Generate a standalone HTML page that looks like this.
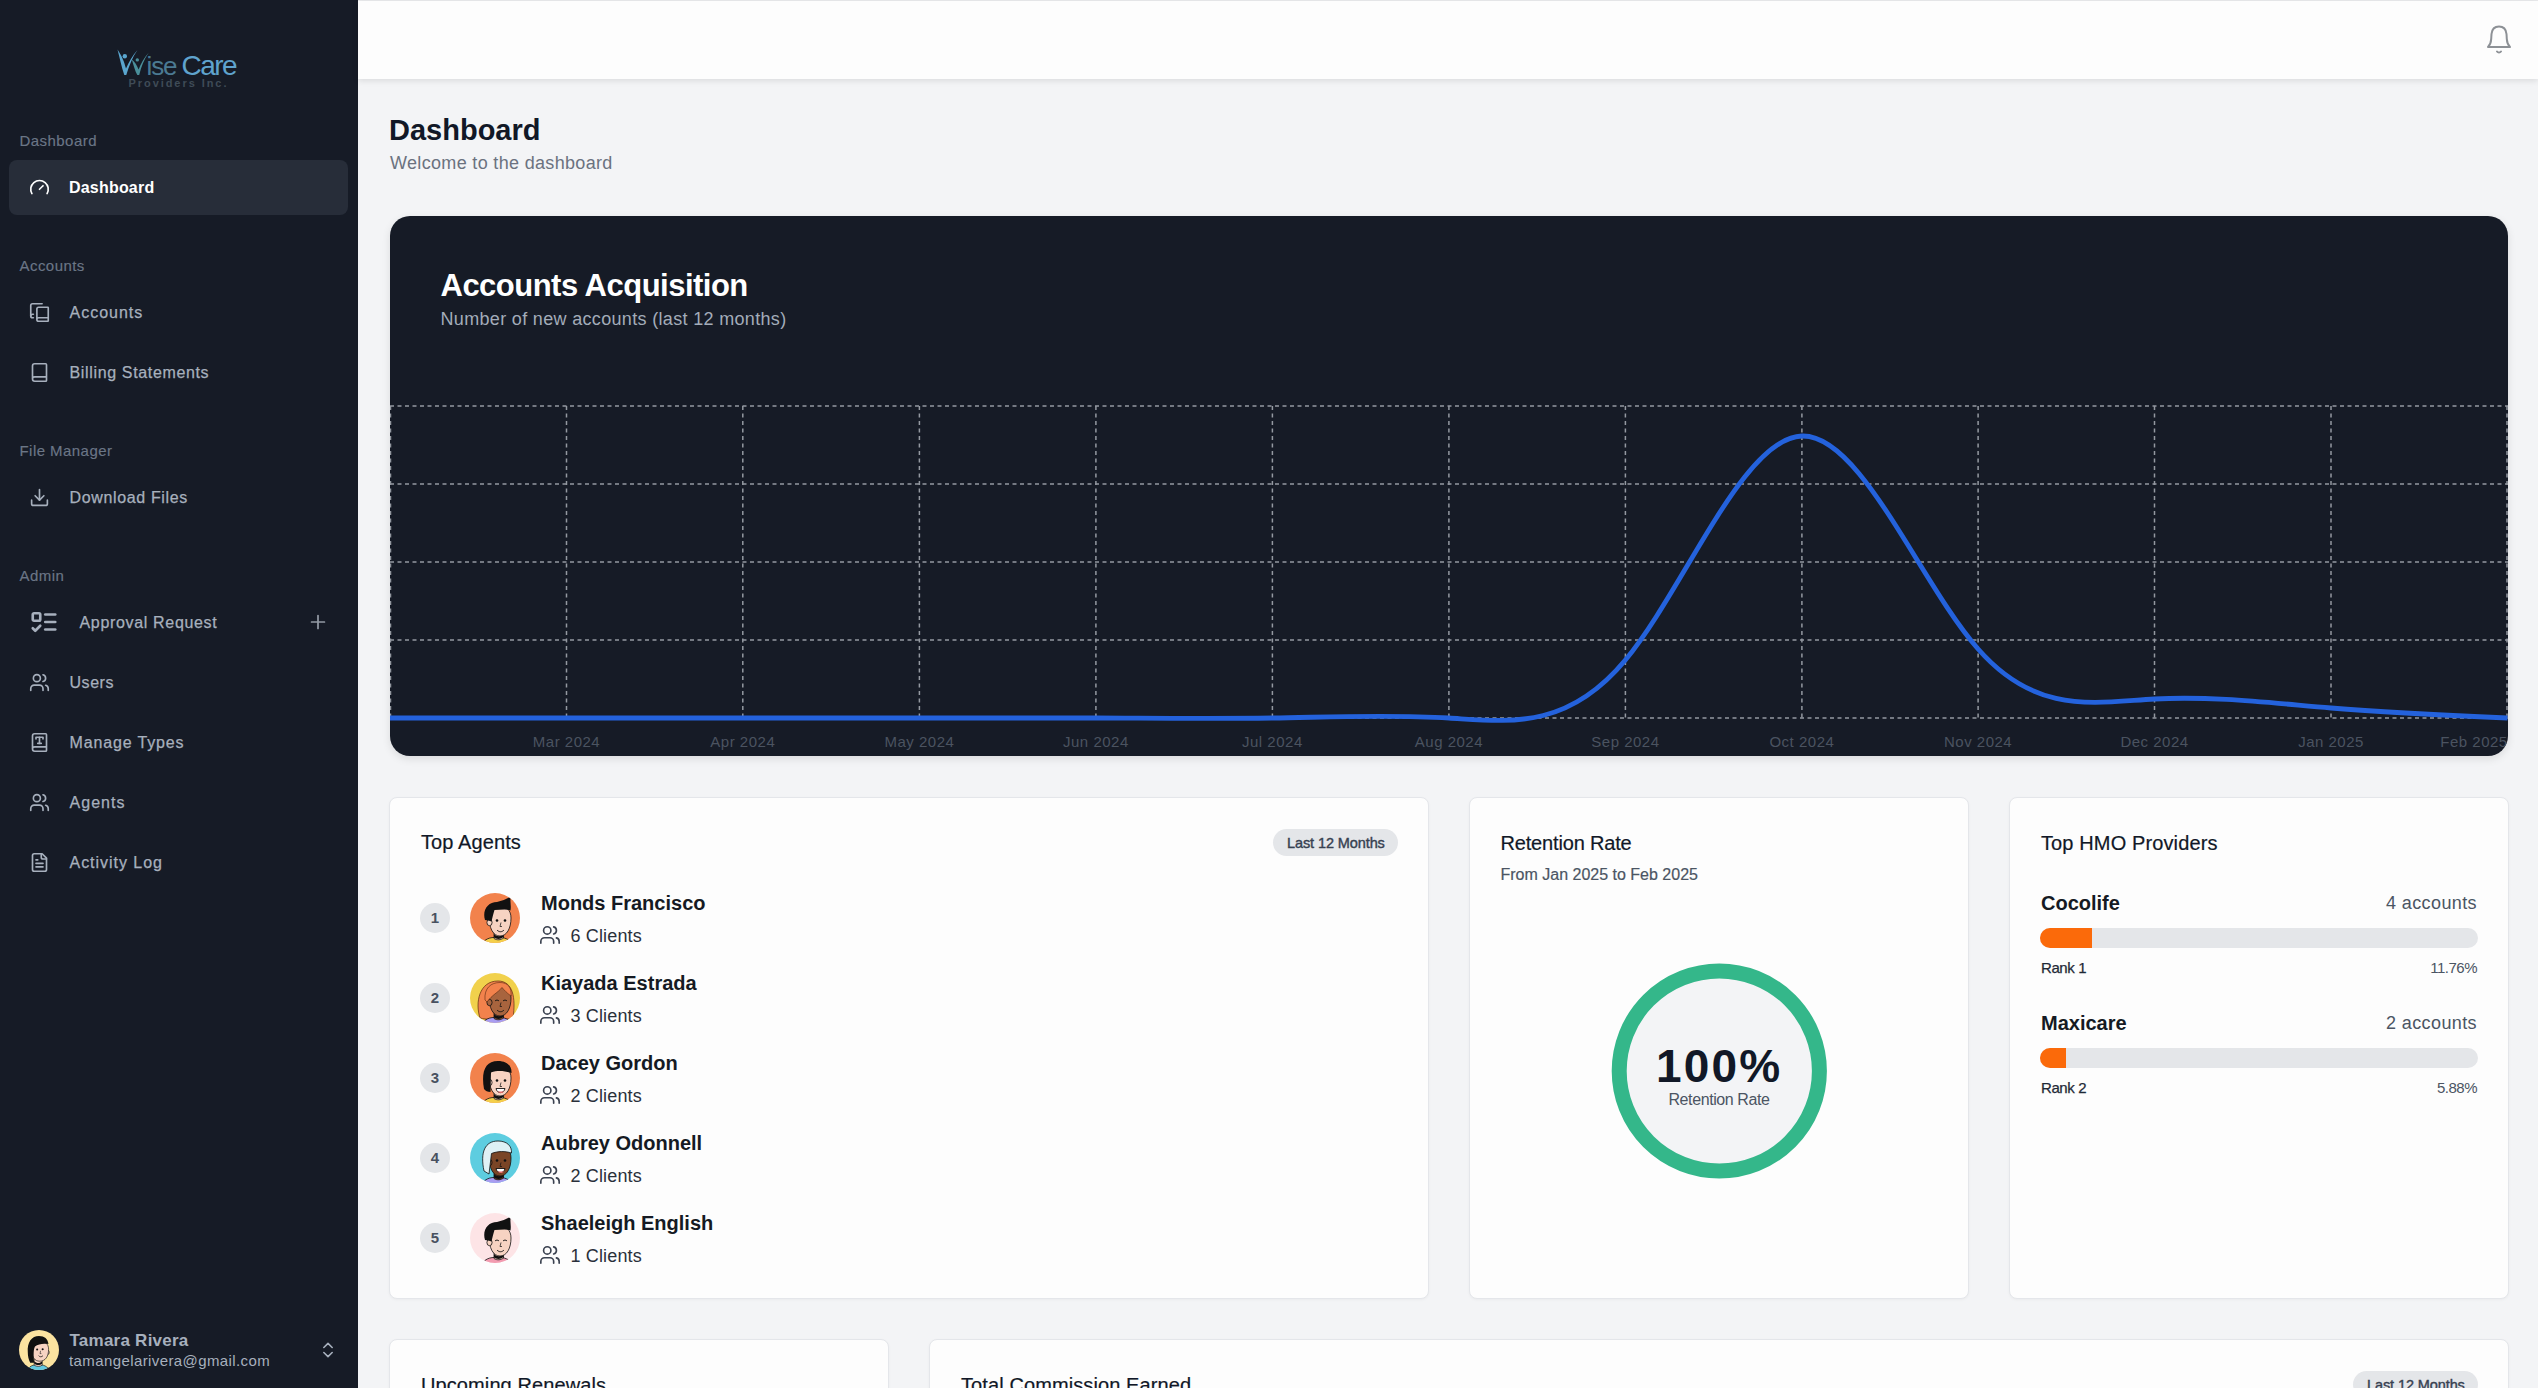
<!DOCTYPE html>
<html><head><meta charset="utf-8">
<style>
*{box-sizing:border-box;margin:0;padding:0}
html,body{width:2538px;height:1388px;overflow:hidden;background:#f3f4f6;font-family:"Liberation Sans",sans-serif}
.a{position:absolute;white-space:nowrap;line-height:1}
#side{position:absolute;left:0;top:0;width:358px;height:1388px;background:#161b26}
.gl{font-size:15px;color:#6b7686;letter-spacing:0.45px;-webkit-text-stroke:0.15px #6b7686}
.ni{font-size:16px;color:#a7b0bd;letter-spacing:0.55px;-webkit-text-stroke:0.25px #a7b0bd}
.ic{position:absolute;fill:none;stroke:#a7b0bd;stroke-width:1.9;stroke-linecap:round;stroke-linejoin:round}
#hdr{position:absolute;left:358px;top:1px;width:2180px;height:78px;background:#fdfdfd;box-shadow:0 2px 6px rgba(0,0,0,0.10)}
.card{position:absolute;background:#fdfdfd;border:1.5px solid #e4e6ea;border-radius:8px;box-shadow:0 1px 3px rgba(0,0,0,0.04)}
.ttl{font-size:20px;color:#111827;letter-spacing:0.1px;-webkit-text-stroke:0.2px #111827}
.rk{position:absolute;width:30px;height:30px;border-radius:50%;background:#e4e6e9;color:#485160;font-size:15px;font-weight:700;text-align:center;line-height:30px}
.nm{font-size:20px;font-weight:700;color:#151a23}
.cl{font-size:18px;color:#2a303a;letter-spacing:0.15px}
.av{position:absolute;width:50px;height:50px}
</style></head><body>

<!-- SIDEBAR -->
<div id="side">
  <!-- logo -->
  <svg class="a" style="left:105px;top:40px" width="150" height="60" viewBox="0 0 150 60">
    <path d="M12.5,9.5 C14.5,17 16.5,27 19.3,35 L21.3,35 C24,26 27.5,17 32.5,10 C27.5,15.5 23.8,22 21,28.5 C19.2,22 17.5,17 12.5,9.5 Z" fill="#5aa6cf"/>
    <circle cx="19.8" cy="16.3" r="2.2" fill="#5aa6cf"/>
    <path d="M26.8,19.5 C28.5,25 30,31 32.3,35 L34.2,35 C36.2,27 39,19 43.8,12.5 C38.8,18 35.8,24 33.6,29.5 C31.8,25 30,22 26.8,19.5 Z" fill="#4a8f9a"/>
    <circle cx="32.3" cy="19.9" r="1.7" fill="#4a8f9a"/>
    <text x="41.5" y="34.9" font-family="Liberation Sans" font-size="26" fill="#4b7a92" letter-spacing="-1.1">ise</text>
    <text x="76.5" y="34.9" font-family="Liberation Sans" font-size="28" fill="#5fa3cd" letter-spacing="-1.5">Care</text>
    <text x="23.5" y="47.3" font-family="Liberation Sans" font-size="11" font-weight="700" fill="#3f4b57" letter-spacing="1.94">Providers Inc.</text>
  </svg>

  <div class="a gl" style="left:19.5px;top:132.5px">Dashboard</div>
  <div style="position:absolute;left:9px;top:160px;width:339px;height:55px;background:#272d39;border-radius:8px"></div>
  <svg class="ic" style="left:28.5px;top:176.5px;stroke:#fff" width="21" height="21" viewBox="0 0 24 24"><path d="m12 14 4-4"/><path d="M3.34 19a10 10 0 1 1 17.32 0"/></svg>
  <div class="a" style="left:69px;top:180px;font-size:16px;font-weight:700;color:#fff;letter-spacing:0.2px">Dashboard</div>

  <div class="a gl" style="left:19.5px;top:257.5px">Accounts</div>
  <svg class="ic" style="left:28.5px;top:301.5px" width="21" height="21" viewBox="0 0 24 24"><path d="M2 16V4a2 2 0 0 1 2-2h11"/><path d="M22 18H11a2 2 0 1 0 0 4h10.5a.5.5 0 0 0 .5-.5v-15a.5.5 0 0 0-.5-.5H11a2 2 0 0 0-2 2v12"/><path d="M5 14H4a2 2 0 1 0 0 4h1"/></svg>
  <div class="a ni" style="left:69.5px;top:304.5px;letter-spacing:1px">Accounts</div>
  <svg class="ic" style="left:28.5px;top:361.5px" width="21" height="21" viewBox="0 0 24 24"><path d="M4 19.5v-15A2.5 2.5 0 0 1 6.5 2H19a1 1 0 0 1 1 1v18a1 1 0 0 1-1 1H6.5a1 1 0 0 1 0-5H20"/></svg>
  <div class="a ni" style="left:69.5px;top:364.5px;letter-spacing:0.65px">Billing Statements</div>

  <div class="a gl" style="left:19.5px;top:442.5px">File Manager</div>
  <svg class="ic" style="left:28.5px;top:486.5px" width="21" height="21" viewBox="0 0 24 24"><path d="M21 15v4a2 2 0 0 1-2 2H5a2 2 0 0 1-2-2v-4"/><polyline points="7 10 12 15 17 10"/><line x1="12" x2="12" y1="15" y2="3"/></svg>
  <div class="a ni" style="left:69.5px;top:489.5px;letter-spacing:0.65px">Download Files</div>

  <div class="a gl" style="left:19.5px;top:567.5px">Admin</div>
  <svg class="ic" style="left:29px;top:607px;stroke-width:2.1" width="30" height="30" viewBox="0 0 24 24"><rect x="3" y="5" width="6" height="6" rx="1"/><path d="m3 17 2 2 4-4"/><path d="M13 6h8"/><path d="M13 12h8"/><path d="M13 18h8"/></svg>
  <div class="a ni" style="left:79.5px;top:614.5px;letter-spacing:0.67px">Approval Request</div>
  <svg class="ic" style="left:307px;top:611px;stroke:#939aa4" width="22" height="22" viewBox="0 0 24 24"><path d="M5 12h14"/><path d="M12 5v14"/></svg>

  <svg class="ic" style="left:28.5px;top:671.5px" width="21" height="21" viewBox="0 0 24 24"><path d="M16 21v-2a4 4 0 0 0-4-4H6a4 4 0 0 0-4 4v2"/><circle cx="9" cy="7" r="4"/><path d="M22 21v-2a4 4 0 0 0-3-3.87"/><path d="M16 3.13a4 4 0 0 1 0 7.75"/></svg>
  <div class="a ni" style="left:69.5px;top:674.5px">Users</div>
  <svg class="ic" style="left:28.5px;top:731.5px" width="21" height="21" viewBox="0 0 24 24"><path d="M10 13h4"/><path d="M12 6v7"/><path d="M16 8V6H8v2"/><path d="M4 19.5v-15A2.5 2.5 0 0 1 6.5 2H19a1 1 0 0 1 1 1v18a1 1 0 0 1-1 1H6.5a1 1 0 0 1 0-5H20"/></svg>
  <div class="a ni" style="left:69.5px;top:734.5px;letter-spacing:0.85px">Manage Types</div>
  <svg class="ic" style="left:28.5px;top:791.5px" width="21" height="21" viewBox="0 0 24 24"><path d="M16 21v-2a4 4 0 0 0-4-4H6a4 4 0 0 0-4 4v2"/><circle cx="9" cy="7" r="4"/><path d="M22 21v-2a4 4 0 0 0-3-3.87"/><path d="M16 3.13a4 4 0 0 1 0 7.75"/></svg>
  <div class="a ni" style="left:69.5px;top:794.5px;letter-spacing:1.05px">Agents</div>
  <svg class="ic" style="left:28.5px;top:851.5px" width="21" height="21" viewBox="0 0 24 24"><path d="M15 2H6a2 2 0 0 0-2 2v16a2 2 0 0 0 2 2h12a2 2 0 0 0 2-2V7Z"/><path d="M14 2v4a2 2 0 0 0 2 2h4"/><path d="M10 9H8"/><path d="M16 13H8"/><path d="M16 17H8"/></svg>
  <div class="a ni" style="left:69.5px;top:854.5px;letter-spacing:0.97px">Activity Log</div>

  <!-- user -->
  <svg class="a" style="left:19px;top:1330px" width="40" height="40" viewBox="0 0 50 50">
    <defs><clipPath id="cT"><circle cx="25" cy="25" r="25"/></clipPath></defs>
    <g clip-path="url(#cT)"><rect width="50" height="50" fill="#fbe3a0"/>
<path d="M10,52 C12,45 18,43 24,43.5 C30,43 36,45 39,52 Z" fill="#62c8e0" stroke="#111" stroke-width="0.8"/>
<path d="M19,36 L19,44 C22,46 26,46 29,44 L29,36 Z" fill="#f7d3c2" stroke="#111" stroke-width="0.8"/><path d="M19,39 C22,42 26,42 29,39 L29,42 C26,44.5 22,44.5 19,42 Z" fill="#111"/>
<ellipse cx="36" cy="28" rx="1.8" ry="2.6" fill="#f7d3c2" stroke="#111" stroke-width="0.8"/><path d="M15.5,22 C15.5,34 19.5,39 26,39 C33,39 37,33 37,24 C37,17 32,14 26,14 C20,14 15.5,16 15.5,22 Z" fill="#f7d3c2" stroke="#111" stroke-width="0.8"/>
<path d="M11,28 C10,15 16,7.5 25,7.5 C32,7.5 36,11 36.8,17.5 C30,16.5 24,17.5 20,20.5 C18,24 18,31 19,41 L14,41 C12,37 11,32 11,28 Z" fill="#111"/>
<circle cx="22.7" cy="24.4" r="1.3" fill="#111"/><circle cx="29.6" cy="24" r="1.3" fill="#111"/>
<path d="M27,26 L26.3,29.5 L28,29.5" stroke="#111" stroke-width="0.7" fill="none"/>
<path d="M24.5,32 C26,34 28.5,34 30,32" stroke="#111" stroke-width="0.9" fill="none"/>
</g>
  </svg>
  <div class="a" style="left:69.5px;top:1331.5px;font-size:17px;font-weight:700;color:#a7b0bd;letter-spacing:0.24px">Tamara Rivera</div>
  <div class="a" style="left:69px;top:1353px;font-size:15px;color:#a7b0bd;letter-spacing:0.4px">tamangelarivera@gmail.com</div>
  <svg class="ic" style="left:318px;top:1340px" width="20" height="20" viewBox="0 0 24 24"><path d="m7 15 5 5 5-5"/><path d="m7 9 5-5 5 5"/></svg>
</div>

<!-- HEADER -->
<div style="position:absolute;left:358px;top:0;width:2180px;height:1px;background:#e9eaec"></div>
<div id="hdr"></div>
<svg class="a" style="left:2485px;top:24px" width="28" height="32" viewBox="0 0 28 32" fill="none" stroke="#8d9196" stroke-width="2" stroke-linejoin="round" stroke-linecap="round">
  <path d="M3,23 C5,21 6,19 6.2,15 L6.5,10 C7,5 10,2.5 14,2.5 C18,2.5 21,5 21.5,10 L21.8,15 C22,19 23,21 25,23 Z"/>
  <path d="M12,27.5 C13,28.8 15,28.8 16,27.5"/>
</svg>

<!-- TITLE -->
<div class="a" style="left:389px;top:115.5px;font-size:29px;font-weight:700;color:#111827;letter-spacing:0px">Dashboard</div>
<div class="a" style="left:390px;top:153.8px;font-size:18px;color:#6b7280;letter-spacing:0.33px">Welcome to the dashboard</div>

<!-- CHART CARD -->
<div style="position:absolute;left:390px;top:216px;width:2118px;height:540px;background:#161b26;border-radius:20px;box-shadow:0 3px 8px rgba(0,0,0,0.10);overflow:hidden">
  <div class="a" style="left:50.5px;top:54px;font-size:31px;font-weight:700;color:#fff;letter-spacing:-0.51px">Accounts Acquisition</div>
  <div class="a" style="left:50.5px;top:93.5px;font-size:18px;color:#a3acb9;letter-spacing:0.33px">Number of new accounts (last 12 months)</div>
</div>
<svg style="position:absolute;left:0;top:0" width="2538" height="1388">
  <defs><clipPath id="cc"><rect x="390" y="216" width="2118" height="540" rx="20"/></clipPath></defs>
  <g clip-path="url(#cc)">
  <g stroke="#9499a1" stroke-width="1.5" stroke-dasharray="4 3.5" fill="none">
    <path d="M390,406H2508M390,484H2508M390,562H2508M390,640H2508M390,718H2508"/>
    <path d="M390.5,406V718M566.5,406V718M742.8,406V718M919.4,406V718M1095.9,406V718M1272.4,406V718M1448.9,406V718M1625.4,406V718M1801.9,406V718M1978.1,406V718M2154.5,406V718M2331,406V718M2507,406V718"/>
  </g>
  <path id="ln" fill="none" stroke="#2462dc" stroke-width="4.8" d="M390.0,718.0C448.9,718.0,507.7,718.0,566.5,718.0C625.3,718.0,684.0,718.0,742.8,718.0C801.6,718.0,860.5,718.1,919.4,718.0C978.3,717.9,1037.1,717.8,1095.9,718.0C1154.7,718.2,1213.6,718.9,1272.4,718.0C1331.2,717.1,1390.1,714.5,1448.9,718.0C1507.7,721.5,1566.6,730.9,1625.4,660.0C1684.2,589.1,1743.1,437.8,1801.9,436.0C1860.7,434.2,1919.4,582.0,1978.1,649.0C2036.8,716.0,2095.7,702.2,2154.5,699.0C2213.3,695.8,2272.2,703.1,2331.0,708.0C2389.8,712.9,2448.7,715.5,2507.5,718.0"/>
  <g font-family="Liberation Sans" font-size="15" fill="#4b5360" text-anchor="middle" letter-spacing="0.5">
    <text x="566.5" y="747">Mar 2024</text><text x="742.8" y="747">Apr 2024</text><text x="919.4" y="747">May 2024</text>
    <text x="1095.9" y="747">Jun 2024</text><text x="1272.4" y="747">Jul 2024</text><text x="1448.9" y="747">Aug 2024</text>
    <text x="1625.4" y="747">Sep 2024</text><text x="1801.9" y="747">Oct 2024</text><text x="1978.1" y="747">Nov 2024</text>
    <text x="2154.5" y="747">Dec 2024</text><text x="2331" y="747">Jan 2025</text><text x="2474" y="747">Feb 2025</text>
  </g>
  </g>
</svg>

<!-- CARDS ROW 2 -->
<div class="card" style="left:389px;top:797px;width:1040px;height:502px"></div>
<div class="card" style="left:1469px;top:797px;width:500px;height:502px"></div>
<div class="card" style="left:2009px;top:797px;width:500px;height:502px"></div>
<!-- CARDS ROW 3 -->
<div class="card" style="left:389px;top:1339px;width:500px;height:200px"></div>
<div class="card" style="left:929px;top:1339px;width:1580px;height:200px"></div>

<svg width="0" height="0" style="position:absolute">
 <defs>
  <clipPath id="avc"><circle cx="25" cy="25" r="25"/></clipPath>
  <symbol id="usr" viewBox="0 0 24 24"><g fill="none" stroke="#3b4250" stroke-width="1.8" stroke-linecap="round" stroke-linejoin="round"><path d="M16 21v-2a4 4 0 0 0-4-4H6a4 4 0 0 0-4 4v2"/><circle cx="9" cy="7" r="4"/><path d="M22 21v-2a4 4 0 0 0-3-3.87"/><path d="M16 3.13a4 4 0 0 1 0 7.75"/></g></symbol>
 </defs>
</svg>

<!-- TOP AGENTS -->
<div class="a ttl" style="left:421px;top:832.4px">Top Agents</div>
<div style="position:absolute;left:1273px;top:829px;width:125px;height:27px;border-radius:14px;background:#e4e6e9"></div>
<div class="a" style="left:1287px;top:835.6px;font-size:14.5px;color:#374151;letter-spacing:-0.1px;-webkit-text-stroke:0.4px #374151">Last 12 Months</div>

<div class="rk" style="left:420px;top:903px">1</div>
<svg class="av" style="left:470px;top:893px" viewBox="0 0 50 50"><g clip-path="url(#avc)">
 <rect width="50" height="50" fill="#f2824c"/><path d="M12,52 C14,46 20,44 27,44.5 C34,44 40,46 43,52 Z" fill="#f4cf4a" stroke="#111" stroke-width="0.8"/><path d="M24,37 L24,45.5 C27,47.5 31,47 33.5,45 L33.5,37 Z" fill="#f7d3c2" stroke="#111" stroke-width="0.8"/><path d="M24,41 C27,44 31,44 33.5,41 L33.5,44 C30.5,46.5 26.5,46.5 24,44.5 Z" fill="#111"/><path d="M19,23 C19,35 23,43 30,43 C37,43 41,35 41,25 C41,17 36,13 30,13 C24,13 19,16 19,23 Z" fill="#f7d3c2" stroke="#111" stroke-width="0.8"/><ellipse cx="19.5" cy="29.5" rx="2.6" ry="3.2" fill="#f7d3c2" stroke="#111" stroke-width="0.8"/><path d="M15,27 C12,17 18,9 27,9 C32,8 37,6 41,3.5 C39.5,8 41.5,12 40.5,17.5 C36,15.5 30,17 24.5,17 C23.5,20 22.5,24 21.5,28.5 C19.5,27.5 17,27.5 15,27 Z" fill="#111"/><circle cx="27" cy="27.5" r="1.3" fill="#111"/><circle cx="35" cy="27.5" r="1.3" fill="#111"/><path d="M31,29.5 L30,33.5 L32,33.5" stroke="#111" stroke-width="0.7" fill="none"/><path d="M27,37 C29,39.3 32,39.3 34,37" stroke="#111" stroke-width="0.9" fill="none"/>
</g></svg>
<div class="a nm" style="left:541px;top:893px">Monds Francisco</div>
<svg style="position:absolute;left:539px;top:924px" width="22" height="22"><use href="#usr"/></svg>
<div class="a cl" style="left:570.5px;top:927.2px">6 Clients</div>

<div class="rk" style="left:420px;top:983px">2</div>
<svg class="av" style="left:470px;top:973px" viewBox="0 0 50 50"><g clip-path="url(#avc)">
 <rect width="50" height="50" fill="#f1d14c"/><path d="M10,45 C5,30 9,8 28,8 C43,8 46,25 43,45 C38,47 15,47 10,45 Z" fill="#f2824c" stroke="#5a2a10" stroke-width="0.7"/><path d="M12,52 C14,46 20,44 27,44.5 C34,44 40,46 43,52 Z" fill="#a99cf0" stroke="#111" stroke-width="0.8"/><path d="M24,37 L24,45.5 C27,47.5 31,47 33.5,45 L33.5,37 Z" fill="#a8643e" stroke="#111" stroke-width="0.8"/><path d="M24,41 C27,44 31,44 33.5,41 L33.5,44 C30.5,46.5 26.5,46.5 24,44.5 Z" fill="#111"/><path d="M19,23 C19,35 23,43 30,43 C37,43 41,35 41,25 C41,17 36,13 30,13 C24,13 19,16 19,23 Z" fill="#a8643e" stroke="#111" stroke-width="0.8"/><ellipse cx="19.5" cy="29.5" rx="2.6" ry="3.2" fill="#a8643e" stroke="#111" stroke-width="0.8"/><path d="M15,27 C14,15 21,9.5 30,9.5 C38,9.5 42,15 41,23 C37,20 34,17 32,14.5 C28,19.5 22,22 17,29 Z" fill="#f2824c" stroke="#5a2a10" stroke-width="0.6"/><path d="M25,28 C26,26.8 28,26.8 29,28 M33,28 C34,26.8 36,26.8 37,28" stroke="#111" stroke-width="0.9" fill="none"/><path d="M31,29.5 L30,33.5 L32,33.5" stroke="#111" stroke-width="0.7" fill="none"/><path d="M27,37 C29,39.3 32,39.3 34,37" stroke="#111" stroke-width="0.9" fill="none"/>
</g></svg>
<div class="a nm" style="left:541px;top:973px">Kiayada Estrada</div>
<svg style="position:absolute;left:539px;top:1004px" width="22" height="22"><use href="#usr"/></svg>
<div class="a cl" style="left:570.5px;top:1007.2px">3 Clients</div>

<div class="rk" style="left:420px;top:1063px">3</div>
<svg class="av" style="left:470px;top:1053px" viewBox="0 0 50 50"><g clip-path="url(#avc)">
 <rect width="50" height="50" fill="#f2824c"/><path d="M12,52 C14,46 20,44 27,44.5 C34,44 40,46 43,52 Z" fill="#f4cf4a" stroke="#111" stroke-width="0.8"/><path d="M24,37 L24,45.5 C27,47.5 31,47 33.5,45 L33.5,37 Z" fill="#f7d3c2" stroke="#111" stroke-width="0.8"/><path d="M24,41 C27,44 31,44 33.5,41 L33.5,44 C30.5,46.5 26.5,46.5 24,44.5 Z" fill="#111"/><path d="M19,23 C19,35 23,43 30,43 C37,43 41,35 41,25 C41,17 36,13 30,13 C24,13 19,16 19,23 Z" fill="#f7d3c2" stroke="#111" stroke-width="0.8"/><ellipse cx="19.5" cy="29.5" rx="2.6" ry="3.2" fill="#f7d3c2" stroke="#111" stroke-width="0.8"/><path d="M14,36 C11,19 15,8 28,8 C37,8 42,13 41.5,20 C35,18 28,17 21,19.5 L20.5,39 C17.5,39 15.5,38 14,36 Z" fill="#111"/><circle cx="27" cy="27.5" r="1.3" fill="#111"/><circle cx="35" cy="27.5" r="1.3" fill="#111"/><path d="M31,29.5 L30,33.5 L32,33.5" stroke="#111" stroke-width="0.7" fill="none"/><path d="M26,35.5 C27,41 34,41 35,35.5 Z" fill="#fff" stroke="#111" stroke-width="0.9"/><path d="M27.5,38.5 C29.5,40.5 32,40.5 34,38.5" fill="#e86a6a"/>
</g></svg>
<div class="a nm" style="left:541px;top:1053px">Dacey Gordon</div>
<svg style="position:absolute;left:539px;top:1084px" width="22" height="22"><use href="#usr"/></svg>
<div class="a cl" style="left:570.5px;top:1087.2px">2 Clients</div>

<div class="rk" style="left:420px;top:1143px">4</div>
<svg class="av" style="left:470px;top:1133px" viewBox="0 0 50 50"><g clip-path="url(#avc)">
 <rect width="50" height="50" fill="#5dcde0"/><path d="M12,52 C14,46 20,44 27,44.5 C34,44 40,46 43,52 Z" fill="#a99cf0" stroke="#111" stroke-width="0.8"/><path d="M24,37 L24,45.5 C27,47.5 31,47 33.5,45 L33.5,37 Z" fill="#7a4526" stroke="#111" stroke-width="0.8"/><path d="M24,41 C27,44 31,44 33.5,41 L33.5,44 C30.5,46.5 26.5,46.5 24,44.5 Z" fill="#111"/><path d="M19,23 C19,35 23,43 30,43 C37,43 41,35 41,25 C41,17 36,13 30,13 C24,13 19,16 19,23 Z" fill="#7a4526" stroke="#111" stroke-width="0.8"/><ellipse cx="19.5" cy="29.5" rx="2.6" ry="3.2" fill="#7a4526" stroke="#111" stroke-width="0.8"/><path d="M14,38 C10,19 15,8 28,8 C37,8 42,13 41.5,20 C35,18 28,18 21.5,20.5 L19,41 Z" fill="#dff1f5" stroke="#111" stroke-width="0.8"/><circle cx="27" cy="27.5" r="1.3" fill="#111"/><circle cx="35" cy="27.5" r="1.3" fill="#111"/><path d="M31,29.5 L30,33.5 L32,33.5" stroke="#111" stroke-width="0.7" fill="none"/><path d="M26,35.5 C27,41 34,41 35,35.5 Z" fill="#fff" stroke="#111" stroke-width="0.9"/><path d="M27.5,38.5 C29.5,40.5 32,40.5 34,38.5" fill="#e86a6a"/>
</g></svg>
<div class="a nm" style="left:541px;top:1133px">Aubrey Odonnell</div>
<svg style="position:absolute;left:539px;top:1164px" width="22" height="22"><use href="#usr"/></svg>
<div class="a cl" style="left:570.5px;top:1167.2px">2 Clients</div>

<div class="rk" style="left:420px;top:1223px">5</div>
<svg class="av" style="left:470px;top:1213px" viewBox="0 0 50 50"><g clip-path="url(#avc)">
 <rect width="50" height="50" fill="#fde4e6"/><path d="M12,52 C14,46 20,44 27,44.5 C34,44 40,46 43,52 Z" fill="#f29bb0" stroke="#111" stroke-width="0.8"/><path d="M24,37 L24,45.5 C27,47.5 31,47 33.5,45 L33.5,37 Z" fill="#f7d3c2" stroke="#111" stroke-width="0.8"/><path d="M24,41 C27,44 31,44 33.5,41 L33.5,44 C30.5,46.5 26.5,46.5 24,44.5 Z" fill="#111"/><path d="M19,23 C19,35 23,43 30,43 C37,43 41,35 41,25 C41,17 36,13 30,13 C24,13 19,16 19,23 Z" fill="#f7d3c2" stroke="#111" stroke-width="0.8"/><ellipse cx="19.5" cy="29.5" rx="2.6" ry="3.2" fill="#f7d3c2" stroke="#111" stroke-width="0.8"/><path d="M15,27 C12,17 18,9 27,9 C32,8 37,6 41,3.5 C39.5,8 41.5,12 40.5,17.5 C36,15.5 30,17 24.5,17 C23.5,20 22.5,24 21.5,28.5 C19.5,27.5 17,27.5 15,27 Z" fill="#111"/><path d="M25,28 C26,26.8 28,26.8 29,28 M33,28 C34,26.8 36,26.8 37,28" stroke="#111" stroke-width="0.9" fill="none"/><path d="M31,29.5 L30,33.5 L32,33.5" stroke="#111" stroke-width="0.7" fill="none"/><path d="M27,37 C29,39.3 32,39.3 34,37" stroke="#111" stroke-width="0.9" fill="none"/>
</g></svg>
<div class="a nm" style="left:541px;top:1213px">Shaeleigh English</div>
<svg style="position:absolute;left:539px;top:1244px" width="22" height="22"><use href="#usr"/></svg>
<div class="a cl" style="left:570.5px;top:1247.2px">1 Clients</div>

<!-- RETENTION -->
<div class="a ttl" style="left:1500.5px;top:832.6px;letter-spacing:-0.17px">Retention Rate</div>
<div class="a" style="left:1500.5px;top:867px;font-size:16px;color:#4b5563;-webkit-text-stroke:0.2px #4b5563">From Jan 2025 to Feb 2025</div>
<svg style="position:absolute;left:1599px;top:951px" width="240" height="240">
 <circle cx="120.3" cy="120" r="100.1" fill="#f3f4f6" stroke="#34b78a" stroke-width="15"/>
</svg>
<div class="a" style="left:1656px;top:1043.2px;font-size:46px;font-weight:700;color:#111827;letter-spacing:2.2px">100%</div>
<div class="a" style="left:1719px;top:1092.2px;font-size:16px;color:#4b5563;letter-spacing:-0.4px;transform:translateX(-50%)">Retention Rate</div>

<!-- HMO -->
<div class="a ttl" style="left:2041px;top:832.5px;letter-spacing:0.12px">Top HMO Providers</div>
<div class="a" style="left:2041px;top:893px;font-size:20px;font-weight:700;color:#151a23">Cocolife</div>
<div class="a" style="right:61px;top:893.7px;font-size:18px;color:#4b5563;letter-spacing:0.39px">4 accounts</div>
<div style="position:absolute;left:2040px;top:928px;width:438px;height:20px;border-radius:10px;background:#e4e6e9;overflow:hidden"><div style="width:51.5px;height:20px;background:#fb6a0a"></div></div>
<div class="a" style="left:2041px;top:960.3px;font-size:15px;color:#1f2937;letter-spacing:-0.4px;-webkit-text-stroke:0.25px #1f2937">Rank 1</div>
<div class="a" style="right:61px;top:960.3px;font-size:15px;color:#4b5563;letter-spacing:-0.5px">11.76%</div>

<div class="a" style="left:2041px;top:1013.2px;font-size:20px;font-weight:700;color:#151a23">Maxicare</div>
<div class="a" style="right:61px;top:1013.8px;font-size:18px;color:#4b5563;letter-spacing:0.39px">2 accounts</div>
<div style="position:absolute;left:2040px;top:1048px;width:438px;height:20px;border-radius:10px;background:#e4e6e9;overflow:hidden"><div style="width:25.8px;height:20px;background:#fb6a0a"></div></div>
<div class="a" style="left:2041px;top:1080.4px;font-size:15px;color:#1f2937;letter-spacing:-0.4px;-webkit-text-stroke:0.25px #1f2937">Rank 2</div>
<div class="a" style="right:61px;top:1080.4px;font-size:15px;color:#4b5563;letter-spacing:-0.5px">5.88%</div>

<!-- ROW 3 -->
<div class="a ttl" style="left:421px;top:1375px">Upcoming Renewals</div>
<div class="a ttl" style="left:961px;top:1375px">Total Commission Earned</div>
<div style="position:absolute;left:2353px;top:1371px;width:125px;height:27px;border-radius:14px;background:#e4e6e9"></div>
<div class="a" style="left:2367px;top:1377.6px;font-size:14.5px;color:#374151;letter-spacing:-0.1px;-webkit-text-stroke:0.4px #374151">Last 12 Months</div>

</body></html>
